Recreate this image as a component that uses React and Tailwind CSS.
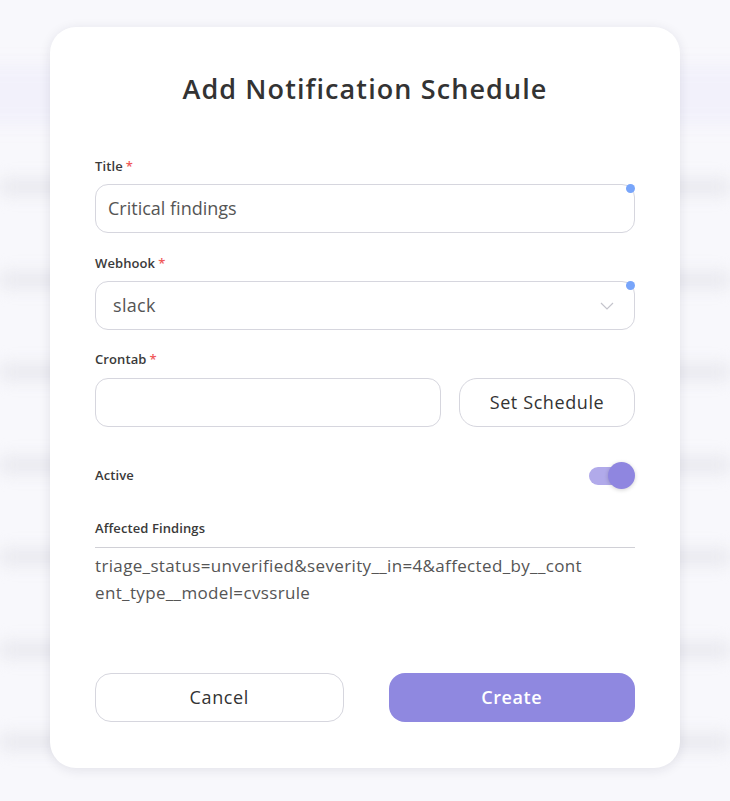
import React from "react";

const rowsY = [0, 1, 2, 3, 4, 5, 6];

function Background() {
  return (
    <div className="flex flex-col bg-[#f8f8fc] h-[801px] w-[730px] overflow-hidden">
      <div className="h-[65px] shrink-0" />
      <div className="h-[60px] shrink-0 mx-[-20px] bg-[#f2f1fb] blur-[8px]" />
      <div className="h-[16px] shrink-0" />
      <div className="flex flex-col shrink-0">
        {rowsY.map((i) => (
          <div key={i} className="h-[92.5px] shrink-0 flex items-center justify-between blur-[8px]">
            <div className="h-[16px] w-[70px] bg-[#e8e8ee]" />
            <div className="h-[16px] w-[70px] bg-[#e8e8ee]" />
          </div>
        ))}
      </div>
    </div>
  );
}

function Label({ children, required }) {
  return (
    <div className="h-[16px] flex items-center text-[13px] font-semibold text-[#3a3a3a] leading-[16px] tracking-[0.1px]">
      {children}
      {required && <span className="ml-[3px] text-[#f05a5a]">*</span>}
    </div>
  );
}

function Dot() {
  return <span className="absolute right-[-1px] top-[-1px] h-[9px] w-[9px] rounded-full bg-[#78a5fa]" />;
}

export default function App() {
  return (
    <div
      className="relative h-[801px] w-[730px] overflow-hidden"
      style={{ fontFamily: '"Open Sans", "Noto Sans", sans-serif' }}
    >
      <Background />
      <div className="absolute inset-0 flex justify-center pt-[27px]">
        <div className="w-[630px] h-[741px] bg-white rounded-[26px] shadow-[0_2px_12px_rgba(30,30,60,0.10)] px-[45px] pt-[46px] flex flex-col">
          <h1 className="text-[27px] leading-[32px] font-semibold text-[#333333] text-center tracking-[1.1px]">
            Add Notification Schedule
          </h1>

          <div className="mt-[53px]">
            <Label required>Title</Label>
            <div className="relative mt-[10px] h-[49px] rounded-[13px] border border-[#d6d6de] flex items-center px-[12px]">
              <span className="text-[18px] text-[#555555]">Critical findings</span>
              <Dot />
            </div>
          </div>

          <div className="mt-[22px]">
            <Label required>Webhook</Label>
            <div className="relative mt-[10px] h-[49px] rounded-[13px] border border-[#d6d6de] flex items-center justify-between pl-[17px] pr-[20px]">
              <span className="text-[18px] text-[#555555] tracking-[0.3px]">slack</span>
              <svg width="14" height="8" viewBox="0 0 14 8" fill="none">
                <path d="M1 1l6 6 6-6" stroke="#c4c4cc" strokeWidth="1.2" />
              </svg>
              <Dot />
            </div>
          </div>

          <div className="mt-[21px]">
            <Label required>Crontab</Label>
            <div className="mt-[11px] flex gap-[18px]">
              <div className="h-[49px] w-[346px] rounded-[13px] border border-[#d6d6de]" />
              <button className="h-[49px] flex-1 rounded-[18px] border border-[#d6d6de] text-[18px] tracking-[0.6px] text-[#333333] bg-white">
                Set Schedule
              </button>
            </div>
          </div>

          <div className="mt-[35px] h-[28px] flex items-center justify-between">
            <span className="text-[13px] font-semibold tracking-[0.1px] text-[#3a3a3a]">Active</span>
            <div className="relative w-[46px] h-[28px] flex items-center">
              <div className="h-[18px] w-[42px] ml-0 rounded-full bg-[#b1aaea]" />
              <div className="absolute right-0 top-[0px] h-[27px] w-[27px] rounded-full bg-[#8f86e0] shadow-[0_1px_4px_rgba(0,0,0,0.18)]" />
            </div>
          </div>

          <div className="mt-[30px]">
            <div className="pb-[11px] border-b border-[#d0d0d6]">
              <Label>Affected Findings</Label>
            </div>
            <div className="pt-[4px] text-[17px] leading-[27px] text-[#555555] tracking-[0.35px]">
              triage_status=unverified&amp;severity__in=4&amp;affected_by__cont
              <br />
              ent_type__model=cvssrule
            </div>
          </div>

          <div className="mt-auto mb-[46px] flex gap-[45px]">
            <button className="h-[49px] flex-1 rounded-[16px] border border-[#d6d6de] bg-white text-[18px] tracking-[0.6px] text-[#333333]">
              Cancel
            </button>
            <button className="h-[49px] flex-1 rounded-[16px] bg-[#8f88e0] text-[18px] tracking-[0.6px] font-semibold text-white">
              Create
            </button>
          </div>
        </div>
      </div>
    </div>
  );
}
